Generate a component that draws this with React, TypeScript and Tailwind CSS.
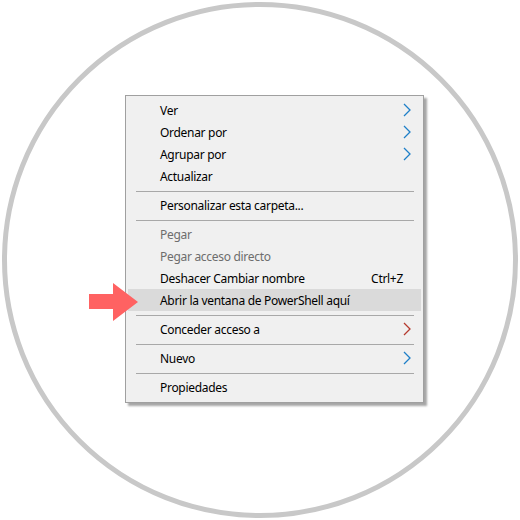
import React from "react";

const Chevron = ({ color }: { color: string }) => (
  <svg width="8" height="14" viewBox="0 0 8 14" className="block">
    <path d="M1 1 L7 7 L1 13" fill="none" stroke={color} strokeWidth="1.3" />
  </svg>
);

type Item = {
  label: string;
  disabled?: boolean;
  sub?: string;
  shortcut?: string;
  hover?: boolean;
  sepAfter?: boolean;
};

const items: Item[] = [
  { label: "Ver", sub: "#1e7fc8" },
  { label: "Ordenar por", sub: "#1e7fc8" },
  { label: "Agrupar por", sub: "#1e7fc8" },
  { label: "Actualizar", sepAfter: true },
  { label: "Personalizar esta carpeta...", sepAfter: true },
  { label: "Pegar", disabled: true },
  { label: "Pegar acceso directo", disabled: true },
  { label: "Deshacer Cambiar nombre", shortcut: "Ctrl+Z" },
  { label: "Abrir la ventana de PowerShell aquí", hover: true, sepAfter: true },
  { label: "Conceder acceso a", sub: "#b53a2e", sepAfter: true },
  { label: "Nuevo", sub: "#1e7fc8", sepAfter: true },
  { label: "Propiedades" },
];

export default function App() {
  return (
    <div
      className="relative w-[520px] h-[520px] bg-white overflow-hidden"
      style={{ fontFamily: '"Noto Sans", "Segoe UI", sans-serif' }}
    >
      <div className="absolute left-[2px] top-[2px] w-[516px] h-[516px] rounded-full border-[5px] border-[#c8c8c8]" />
      <div className="relative pt-[95px] pl-[125px]">
        <div className="w-[299px] bg-[#f0f0f0] border border-[#a0a0a0] pt-[3px] pb-[4px] shadow-[3px_3px_2px_rgba(0,0,0,0.35)]">
          {items.map((it) => (
            <React.Fragment key={it.label}>
              <div
                className={
                  "mx-[2px] h-[22px] flex items-center pt-[2px] pl-[32px] pr-[10px] text-[12px] tracking-[-0.3px] " +
                  (it.hover ? "bg-[#dadada] " : "") +
                  (it.disabled ? "text-[#6d6d6d]" : "text-black")
                }
              >
                <span className="flex-1 whitespace-nowrap">{it.label}</span>
                {it.shortcut && <span className="mr-[8px]">{it.shortcut}</span>}
                {it.sub && (
                  <span className="-mt-[2px]">
                    <Chevron color={it.sub} />
                  </span>
                )}
              </div>
              {it.sepAfter && (
                <div className="h-[7px] pt-[4px] pl-[10px] pr-[9px]">
                  <div className="h-px bg-[#a8a8a8]" />
                </div>
              )}
            </React.Fragment>
          ))}
        </div>
      </div>
      <svg
        className="absolute left-[88px] top-[282px]"
        width="52"
        height="40"
        viewBox="0 0 52 40"
      >
        <polygon
          points="1,12 25,12 25,1 50,20 25,39 25,27 1,27"
          fill="#ff6262"
        />
      </svg>
    </div>
  );
}
